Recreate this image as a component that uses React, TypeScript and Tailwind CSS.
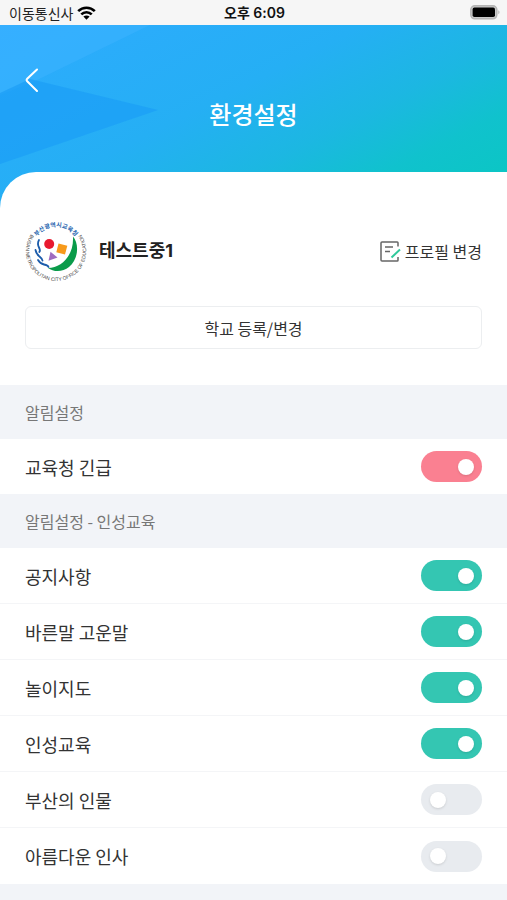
import { useState } from "react";

const cjk = "font-['Noto_Sans_CJK_KR','Noto_Sans',sans-serif]";

type Item = { label: string; on: boolean; tone?: "pink" | "green" };
type Group = { title: string; items: Item[] };

const groups: Group[] = [
  { title: "알림설정", items: [{ label: "교육청 긴급", on: true, tone: "pink" }] },
  {
    title: "알림설정 - 인성교육",
    items: [
      { label: "공지사항", on: true },
      { label: "바른말 고운말", on: true },
      { label: "놀이지도", on: true },
      { label: "인성교육", on: true },
      { label: "부산의 인물", on: false },
      { label: "아름다운 인사", on: false },
    ],
  },
];

function StatusBar() {
  return (
    <div className="grid h-[25px] grid-cols-3 items-center bg-[#f6f6f6] pr-[7px] pl-[9px] text-sm text-[#222]">
      <div className="flex items-center gap-1">
        <span className="whitespace-nowrap">이동통신사</span>
        <svg width="19" height="14" viewBox="0 0 19 14" aria-hidden="true">
          <g fill="none" stroke="#000" strokeWidth="2.6">
            <path d="M1.2 5.2C5.8.6 13.2.6 17.8 5.2" />
            <path d="M4.3 8.4c2.900-2.900 7.500-2.900 10.400 0" />
          </g>
          <path d="M9.500 13.700 6.400 10.600c1.700-1.600 4.500-1.600 6.200 0z" />
        </svg>
      </div>
      <div className="text-center font-['Inter','Noto_Sans_CJK_KR',sans-serif] font-semibold whitespace-nowrap text-[#111]">
        오후 6:09
      </div>
      <svg className="justify-self-end" width="30" height="15" viewBox="0 0 30 15" aria-hidden="true">
        <rect x="0.800" y="0.800" width="26" height="13" rx="4" fill="#c9c9c9" stroke="#b4b4b4" strokeWidth="1.500" />
        <rect x="2.600" y="2.600" width="22.400" height="9.400" rx="1.800" />
        <path d="M28.300 5.300c1.600.8 1.600 3.200 0 4z" fill="#b4b4b4" />
      </svg>
    </div>
  );
}

function Header() {
  return (
    <header className="relative h-[183px] bg-[linear-gradient(153deg,#2eabff_0%,#25aff4_42%,#1cb7e2_62%,#10c2cd_78%,#09c8c0_100%)]">
      <svg
        className="absolute inset-0 h-full w-full"
        viewBox="0 0 507 183"
        preserveAspectRatio="none"
        aria-hidden="true"
      >
        <path d="M0 0H150L35 56 0 70z" fill="#3db4ff" fillOpacity="0.500" />
        <path d="M0 68 30 54 158 85 0 139z" fill="#1a9df6" fillOpacity="0.650" />
      </svg>
      <div className="relative">
        <button type="button" aria-label="뒤로" className="block pt-[43px] pl-[25px]">
          <svg width="14" height="24" viewBox="0 0 14 24" fill="none" stroke="#fff" strokeWidth="2" strokeLinecap="round" strokeLinejoin="round">
            <path d="M12 1.500 2.200 10.800Q1 12 2.200 13.200L12 23" />
          </svg>
        </button>
        <h1 className="mt-1 text-center text-2xl leading-9 font-medium text-white">환경설정</h1>
      </div>
    </header>
  );
}

function Emblem() {
  return (
    <svg className="overflow-visible" width="62" height="62" viewBox="-31 -31 62 62" role="img" aria-label="부산광역시교육청">
      <defs>
        <path id="emblem-top" d="M-24 0A24 24 0 0 1 24 0" />
        <path id="emblem-ring" d="M-24.500 -17.500A30.100 30.100 0 1 0 24.500 -17.500" />
      </defs>
      <text fontSize="6" fontWeight="700" fill="#1d63ae" textAnchor="middle">
        <textPath href="#emblem-top" startOffset="50%">부산광역시교육청</textPath>
      </text>
      <text fontSize="5" fill="#444" textAnchor="middle" fontFamily="Liberation Sans">
        <textPath href="#emblem-ring" startOffset="50%">BUSAN METROPOLITAN CITY OFFICE OF EDUCATION</textPath>
      </text>
      <circle cx="-6.800" cy="-7" r="5" fill="#e8192f" />
      <path d="M2.500-7.500 11.300-5.200 9 3.500.3 1.200z" fill="#f79a1c" />
      <path d="M-5.500.8 1.500 6.500-7.500 9.800z" fill="#9f6cc0" />
      <path d="M17-14.500C23-8 23 8 13 16 7 21-2 21.500-8 17 6 17 18 4 17-14.500z" fill="#0a9b4a" />
      <g fill="none" stroke="#1b5cab" strokeWidth="1.800" strokeLinecap="round">
        <path d="M-17-11c-1.700 3-1.500 4.500 0 7.500s1 4 .3 4.500" />
        <path d="M-20.500-1c.5 3.500 1.500 4.500 4 6.500s3 2.500 3 4" />
        <path d="M-18 9c2 3.500 3.500 4 6 4.500s4 1 4.500 2.500" />
      </g>
    </svg>
  );
}

function Profile() {
  return (
    <section className="px-[25px] pt-12 pb-9">
      <div className="flex items-center">
        <Emblem />
        <strong className="ml-3 font-['Inter','Noto_Sans_CJK_KR',sans-serif] text-lg font-bold text-[#222]">
          테스트중1
        </strong>
        <button type="button" className="ml-auto flex items-center gap-1 text-base text-[#333]">
          <svg width="21" height="21" viewBox="0 0 21 21" fill="none" strokeWidth="1.500" aria-hidden="true">
            <path d="M18 5.500V1.800Q18 1 17.200 1H2Q1 1 1 2V19Q1 20 2 20H17.200Q18 20 18 19.200V16M5 6h8M5 10.500h5" stroke="#666" />
            <path d="M11.500 16.500 20 8.500" stroke="#2fc99b" strokeWidth="2" />
          </svg>
          프로필 변경
        </button>
      </div>
      <button type="button" className="mt-6 h-[43px] w-full rounded-md border border-[#eceef0] text-base text-[#333]">
        학교 등록/변경
      </button>
    </section>
  );
}

function SettingRow({ item }: { item: Item }) {
  const [on, setOn] = useState(item.on);
  const tone = item.tone === "pink" ? "checked:bg-[#fa8091]" : "checked:bg-[#34c6b2]";
  return (
    <label className="flex h-14 items-center justify-between border-b border-[#f4f5f7] px-[25px] text-lg text-[#333] only:h-[55px] last:border-b-0">
      {item.label}
      <input
        type="checkbox"
        role="switch"
        checked={on}
        onChange={(e) => setOn(e.target.checked)}
        className={`flex h-[31px] w-[61px] shrink-0 appearance-none items-center rounded-full bg-[#e8ebef] before:ml-[9px] before:block before:size-4 before:rounded-full before:bg-white before:shadow-sm checked:before:ml-[37px] ${tone}`}
      />
    </label>
  );
}

export default function App() {
  return (
    <div className={`min-h-screen bg-[#f2f4f8] ${cjk}`}>
      <StatusBar />
      <Header />
      <main>
        <div className="relative -mt-9 rounded-tl-[36px] bg-white">
          <Profile />
        </div>
        {groups.map((group) => (
          <section key={group.title}>
            <h2 className="flex h-[54px] items-center px-[25px] text-base text-[#777]">{group.title}</h2>
            <div className="bg-white">
              {group.items.map((item) => (
                <SettingRow key={item.label} item={item} />
              ))}
            </div>
          </section>
        ))}
      </main>
    </div>
  );
}
